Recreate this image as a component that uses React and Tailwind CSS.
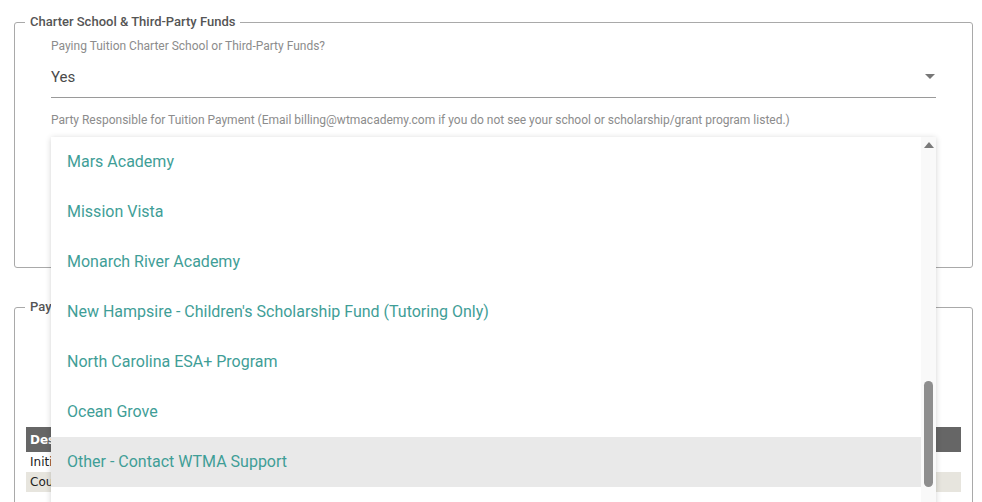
const OPTIONS = [
  "Mars Academy",
  "Mission Vista",
  "Monarch River Academy",
  "New Hampsire - Children's Scholarship Fund (Tutoring Only)",
  "North Carolina ESA+ Program",
  "Ocean Grove",
  "Other - Contact WTMA Support",
  "Pacific Charter School",
];

const HIGHLIGHTED = "Other - Contact WTMA Support";

function Caret({ up = false }) {
  return (
    <svg width="10" height="6" viewBox="0 0 10 6" className="block">
      {up ? (
        <path d="M0 6 L5 0 L10 6 Z" fill="#7a7a7a" />
      ) : (
        <path d="M0 0 L10 0 L5 5 Z" fill="#777" />
      )}
    </svg>
  );
}

function OptionList() {
  return (
    <div className="absolute left-[51px] top-[137px] w-[885px] h-[400px] bg-white shadow-[0_1px_6px_rgba(0,0,0,0.18)] flex">
      <ul className="flex-1">
        {OPTIONS.map((o) => (
          <li
            key={o}
            className={`h-[50px] flex items-center pl-4 text-[16px] text-[#3f9e97] ${
              o === HIGHLIGHTED ? "bg-[#e9e9e9]" : ""
            }`}
          >
            {o}
          </li>
        ))}
      </ul>
      {/* scrollbar */}
      <div className="w-[15px] bg-[#f9f9f9] flex flex-col items-center">
        <div className="pt-[5px]">
          <Caret up />
        </div>
        <div className="mt-[233px] w-[9px] h-[106px] rounded-full bg-[#8e8e8e]" />
      </div>
    </div>
  );
}

export default function App() {
  return (
    <div className="relative w-[982px] h-[502px] overflow-hidden bg-white font-['Roboto',sans-serif]">
      <div className="pt-[14px] pl-[14px] pr-[9px] flex flex-col gap-[31px]">
        {/* Charter School fieldset */}
        <fieldset className="border border-[#a9a9a9] rounded-[3px] h-[254px] px-0">
          <legend className="ml-[10px] px-[5px] text-[13px] font-medium text-[#555] leading-[16px]">
            Charter School &amp; Third-Party Funds
          </legend>
          <div className="pl-[36px] pr-[36px] pt-[8px]">
            <div className="text-[12px] text-[#8c8c8c] leading-[16px]">
              Paying Tuition Charter School or Third-Party Funds?
            </div>
            <div className="h-[40px] flex items-center justify-between border-b border-[#9a9a9a] mt-[4px]">
              <span className="text-[15px] text-[#4a4a4a]">Yes</span>
              <span className="pr-[1px] pb-[1px]">
                <Caret />
              </span>
            </div>
            <div className="text-[12px] text-[#8c8c8c] leading-[16px] mt-[14px]">
              Party Responsible for Tuition Payment (Email billing@wtmacademy.com if you do not see your school or scholarship/grant program listed.)
            </div>
          </div>
        </fieldset>

        {/* Payment fieldset */}
        <fieldset className="border border-[#a9a9a9] rounded-[3px] h-[220px] px-0">
          <legend className="ml-[10px] px-[5px] text-[13px] font-medium text-[#555] leading-[16px]">
            Payment Schedule
          </legend>
          <div className="px-[11px] pt-[112px]">
            <table className="w-full border-collapse font-['DejaVu_Sans',sans-serif] text-[12px]">
              <thead>
                <tr className="bg-[#666] text-white h-[25px]">
                  <th className="text-left pl-[4px] font-bold">Description</th>
                  <th className="text-left">Amount</th>
                </tr>
              </thead>
              <tbody className="text-[#222]">
                <tr className="h-[20px] bg-white">
                  <td className="pl-[4px]">Initial Payment</td>
                  <td></td>
                </tr>
                <tr className="h-[20px] bg-[#e7e5de]">
                  <td className="pl-[4px]">Course Fees</td>
                  <td></td>
                </tr>
              </tbody>
            </table>
          </div>
        </fieldset>
      </div>

      <OptionList />
    </div>
  );
}
